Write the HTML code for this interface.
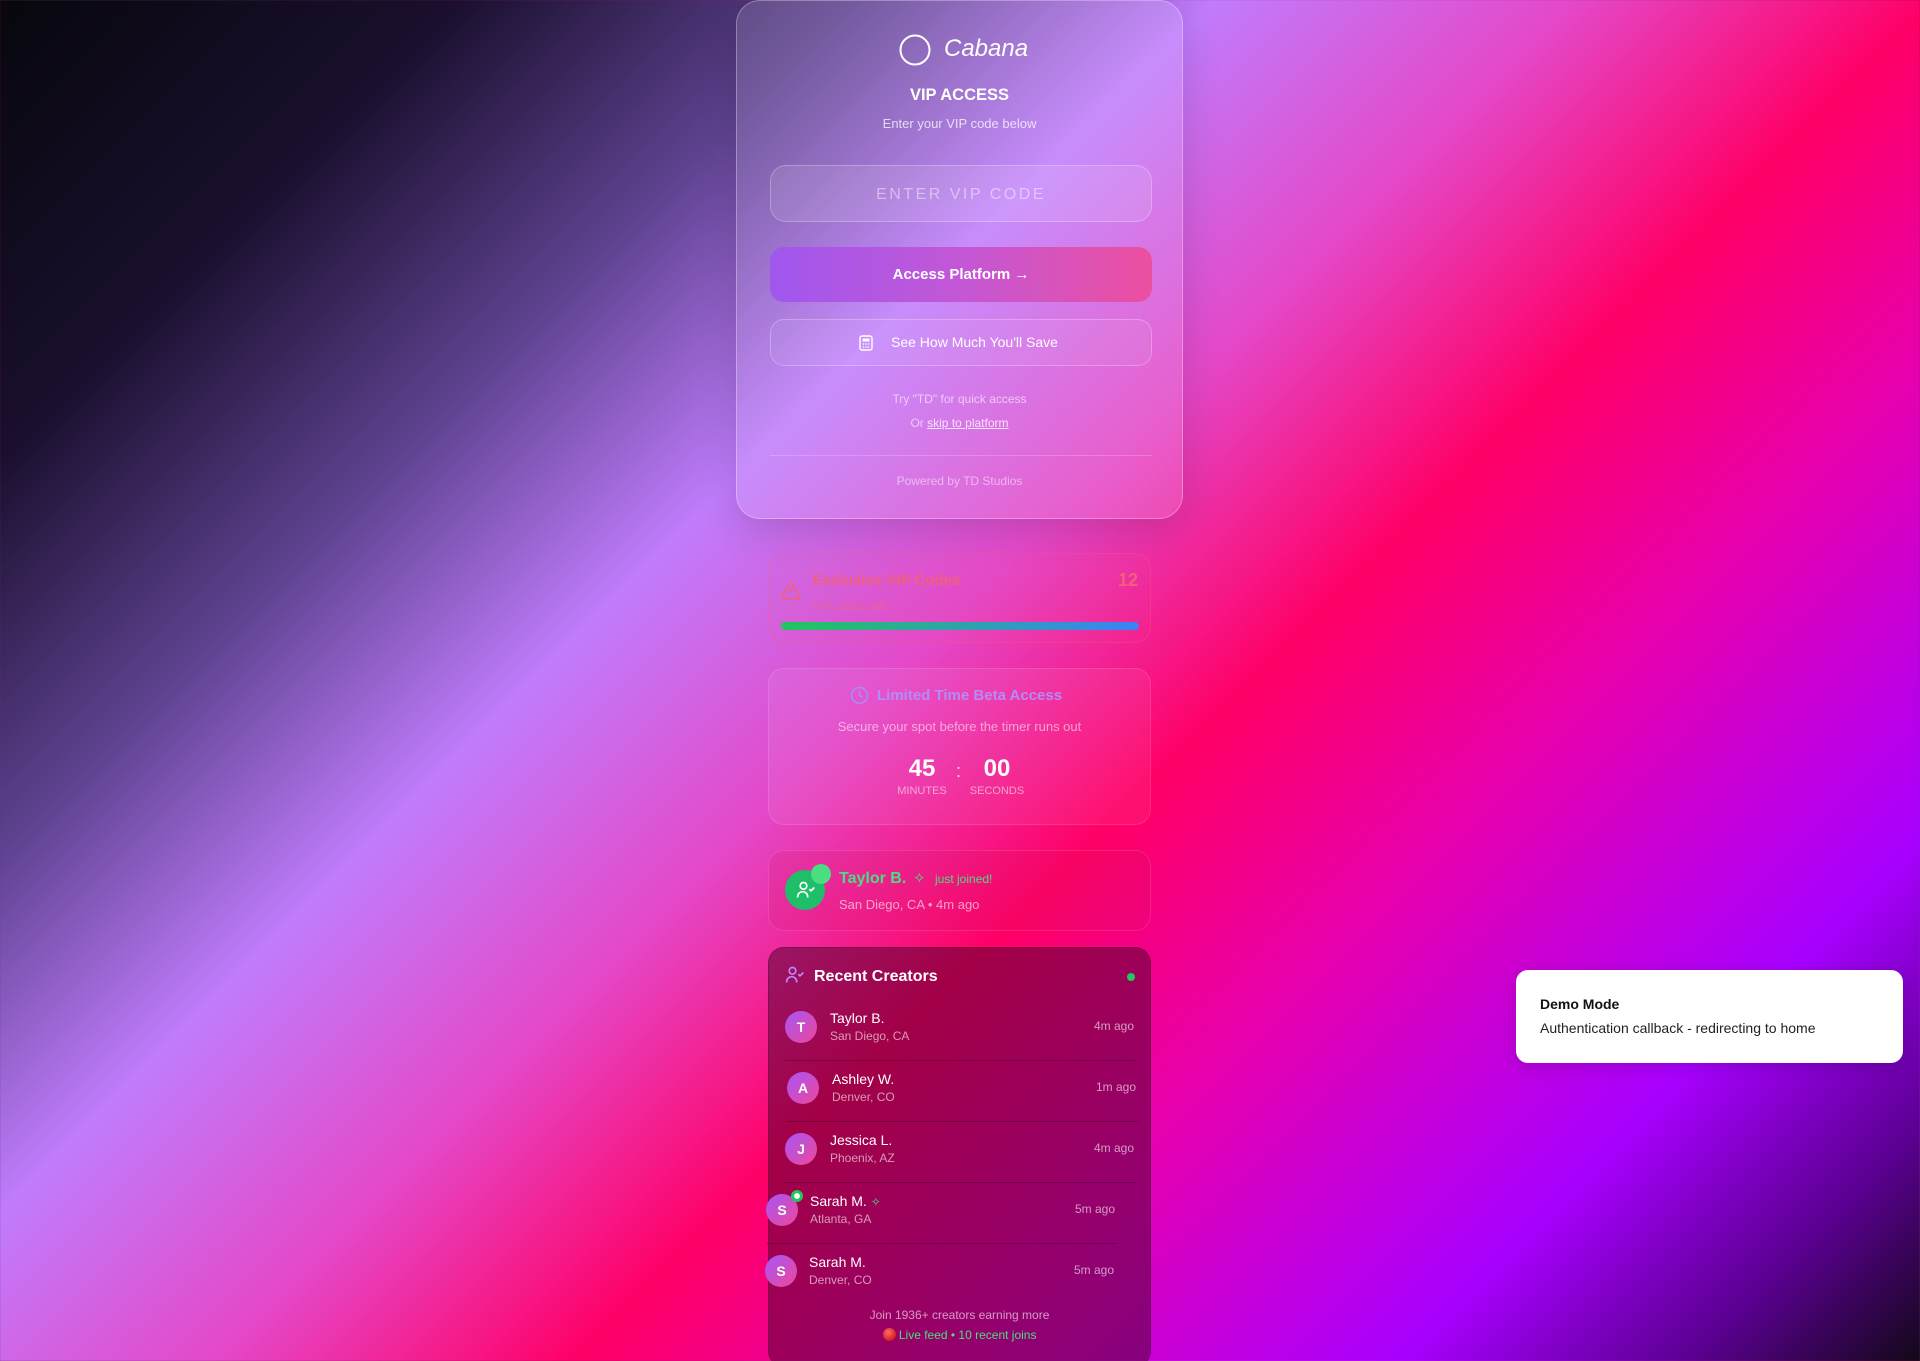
<!DOCTYPE html>
<html><head><meta charset="utf-8"><style>
*{box-sizing:border-box;margin:0;padding:0}
html,body{width:1920px;height:1361px;overflow:hidden}
body{font-family:"Liberation Sans",sans-serif;position:relative;
background:linear-gradient(135deg,#07070c 0%,#1a0f2e 14%,#5e4290 26%,#c07cfc 37%,#e448c8 48%,#ff0066 59%,#e600b0 70%,#a800ff 84%,#5a0090 93%,#120818 100%);}
.abs{position:absolute}
.card{position:absolute;left:736px;top:0;width:447px;height:519px;border-radius:24px;border:1px solid rgba(255,255,255,.3);background:rgba(255,255,255,.13);box-shadow:0 10px 40px rgba(0,0,0,.15)}
.c{text-align:center;left:0;width:100%}
.box{position:absolute;left:768px;width:383px;border-radius:16px;border:1px solid rgba(255,255,255,.12);background:rgba(255,255,255,.06)}
.av{position:absolute;width:32px;height:32px;border-radius:50%;background:linear-gradient(135deg,#a855f7,#ec4899);color:#fff;font-weight:bold;font-size:14px;text-align:center;line-height:32px}
.nm{position:absolute;color:#fff;font-size:14px}
.lc{position:absolute;color:rgba(255,255,255,.6);font-size:12px}
.tm{position:absolute;color:rgba(255,255,255,.6);font-size:12px;text-align:right}
.sep{position:absolute;height:1px;background:rgba(0,0,0,.25)}
</style></head><body>
<div class="card">
  <svg class="abs" style="left:162px;top:33px" width="32" height="32"><circle cx="16" cy="16" r="14.5" fill="none" stroke="#fff" stroke-width="2"/></svg>
  <div class="abs" style="left:207px;top:34px;color:#fff;font-size:24px;font-style:italic">Cabana</div>
  <div class="abs c" style="top:85px;color:#fff;font-size:16.5px;font-weight:bold">VIP ACCESS</div>
  <div class="abs c" style="top:115px;color:rgba(255,255,255,.75);font-size:13px">Enter your VIP code below</div>
  <div class="abs" style="left:33px;top:164px;width:382px;height:57px;border-radius:16px;border:1px solid rgba(255,255,255,.25);background:rgba(255,255,255,.1);text-align:center;line-height:57px;color:rgba(255,255,255,.45);font-size:16px;letter-spacing:2.5px">ENTER VIP CODE</div>
  <div class="abs" style="left:33px;top:246px;width:382px;height:55px;border-radius:14px;background:linear-gradient(90deg,#a057ee,#c357d6 50%,#ec4f9f);text-align:center;line-height:55px;color:#fff;font-size:15px;font-weight:bold">Access Platform →</div>
  <div class="abs" style="left:33px;top:318px;width:382px;height:47px;border-radius:14px;border:1px solid rgba(255,255,255,.25);background:rgba(255,255,255,.06);color:#fff;font-size:14px;line-height:45px">
    <svg class="abs" style="left:88px;top:15px" width="14" height="16" viewBox="0 0 14 16"><rect x="1" y="1" width="12" height="14" rx="2" fill="none" stroke="#fff" stroke-width="1.4"/><rect x="3.5" y="3.5" width="7" height="3" fill="#fff"/><circle cx="4.5" cy="9" r=".8" fill="#fff"/><circle cx="7" cy="9" r=".8" fill="#fff"/><circle cx="9.5" cy="9" r=".8" fill="#fff"/><circle cx="4.5" cy="12" r=".8" fill="#fff"/><circle cx="7" cy="12" r=".8" fill="#fff"/><circle cx="9.5" cy="12" r=".8" fill="#fff"/></svg>
    <span class="abs" style="left:120px">See How Much You'll Save</span></div>
  <div class="abs c" style="top:391px;color:rgba(255,255,255,.6);font-size:12px">Try "TD" for quick access</div>
  <div class="abs c" style="top:415px;color:rgba(255,255,255,.6);font-size:12px">Or <span style="text-decoration:underline;color:rgba(255,255,255,.8)">skip to platform</span></div>
  <div class="abs" style="left:33px;top:454px;width:382px;height:1px;background:rgba(255,255,255,.2)"></div>
  <div class="abs c" style="top:473px;color:rgba(255,255,255,.5);font-size:12px">Powered by TD Studios</div>
</div>

<div class="box" style="top:553px;height:90px;border-color:rgba(255,90,120,.3);background:rgba(255,80,120,.06)">
  <svg class="abs" style="left:12px;top:27px" width="20" height="20" viewBox="0 0 24 24" fill="none" stroke="#f0607a" stroke-width="2"><path d="M10.3 3.9L1.8 18a2 2 0 0 0 1.7 3h17a2 2 0 0 0 1.7-3L13.7 3.9a2 2 0 0 0-3.4 0z"/><path d="M12 9v4M12 17h.01"/></svg>
  <div class="abs" style="left:44px;top:18px;color:#f0607a;font-size:15px;font-weight:bold">Exclusive VIP Codes</div>
  <div class="abs" style="right:12px;top:16px;color:#f0607a;font-size:18px;font-weight:bold">12</div>
  <div class="abs" style="left:44px;top:45px;color:#f06580;font-size:12px;opacity:.7">VIP codes left</div>
  <div class="abs" style="left:12px;top:68px;width:358px;height:8px;border-radius:4px;background:linear-gradient(90deg,#22c55e,#3b82f6)"></div>
</div>

<div class="box" style="top:668px;height:157px">
  <svg class="abs" style="left:81px;top:17px" width="19" height="19" viewBox="0 0 24 24" fill="none" stroke="#a78bfa" stroke-width="2"><circle cx="12" cy="12" r="10"/><path d="M12 6v6l4 2"/></svg>
  <div class="abs" style="left:108px;top:18px;color:#b48cf8;font-size:15px;font-weight:bold">Limited Time Beta Access</div>
  <div class="abs c" style="top:50px;color:rgba(255,255,255,.55);font-size:13px">Secure your spot before the timer runs out</div>
  <div class="abs" style="left:125px;top:86px;width:56px;text-align:center;color:#fff;font-size:24px;font-weight:bold">45</div>
  <div class="abs" style="left:187px;top:92px;color:rgba(255,255,255,.8);font-size:18px">:</div>
  <div class="abs" style="left:196px;top:86px;width:64px;text-align:center;color:#fff;font-size:24px;font-weight:bold">00</div>
  <div class="abs" style="left:120px;top:116px;width:66px;text-align:center;color:rgba(255,255,255,.55);font-size:11px">MINUTES</div>
  <div class="abs" style="left:194px;top:116px;width:68px;text-align:center;color:rgba(255,255,255,.55);font-size:11px">SECONDS</div>
</div>

<div class="box" style="top:850px;height:81px;background:rgba(200,20,90,.15)">
  <div class="abs" style="left:16px;top:19px;width:40px;height:40px;border-radius:50%;background:#1fbf6a"></div>
  <svg class="abs" style="left:27px;top:29px" width="20" height="20" viewBox="0 0 24 24" fill="none" stroke="#fff" stroke-width="2"><circle cx="9" cy="7" r="4"/><path d="M2 21v-1a6 6 0 0 1 12 0v1M16 11l2 2 4-4"/></svg>
  <div class="abs" style="left:42px;top:13px;width:20px;height:20px;border-radius:50%;background:#4ade80"></div>
  <div class="abs" style="left:70px;top:19px;color:#4ade80;font-size:16px;font-weight:bold">Taylor B.</div>
  <div class="abs" style="left:144px;top:18px;color:#4ade80;font-size:15px">✧</div>
  <div class="abs" style="left:166px;top:21px;color:#4ade80;font-size:12px">just joined!</div>
  <div class="abs" style="left:70px;top:46px;color:rgba(255,255,255,.6);font-size:13px">San Diego, CA • 4m ago</div>
</div>

<div class="box" style="top:947px;height:420px;background:rgba(70,0,40,.5);border-color:rgba(0,0,0,.2)">
  <svg class="abs" style="left:16px;top:17px" width="20" height="20" viewBox="0 0 24 24" fill="none" stroke="#c084fc" stroke-width="2"><circle cx="9" cy="7" r="4"/><path d="M2 21v-1a6 6 0 0 1 12 0v1M16 11l2 2 4-4"/></svg>
  <div class="abs" style="left:45px;top:20px;color:#fff;font-size:16px;font-weight:bold">Recent Creators</div>
  <div class="abs" style="left:358px;top:25px;width:8px;height:8px;border-radius:50%;background:#22c55e"></div>

  <div class="av" style="left:16px;top:63px">T</div><div class="nm" style="left:61px;top:62px">Taylor B.</div><div class="lc" style="left:61px;top:81px">San Diego, CA</div><div class="tm" style="right:16px;top:71px">4m ago</div>
  <div class="sep" style="left:16px;top:112px;width:351px"></div>
  <div class="av" style="left:18px;top:124px">A</div><div class="nm" style="left:63px;top:123px">Ashley W.</div><div class="lc" style="left:63px;top:142px">Denver, CO</div><div class="tm" style="right:14px;top:132px">1m ago</div>
  <div class="sep" style="left:18px;top:173px;width:351px"></div>
  <div class="av" style="left:16px;top:185px">J</div><div class="nm" style="left:61px;top:184px">Jessica L.</div><div class="lc" style="left:61px;top:203px">Phoenix, AZ</div><div class="tm" style="right:16px;top:193px">4m ago</div>
  <div class="sep" style="left:16px;top:234px;width:351px"></div>
  <div class="av" style="left:-3px;top:246px">S</div><div class="abs" style="left:22px;top:242px;width:12px;height:12px;border-radius:50%;background:#22c55e;border:3px solid #22c55e;box-shadow:inset 0 0 0 3px #fff"></div>
  <div class="nm" style="left:41px;top:245px">Sarah M. <span style="color:#4ade80;font-size:12px">✧</span></div><div class="lc" style="left:41px;top:264px">Atlanta, GA</div><div class="tm" style="right:35px;top:254px">5m ago</div>
  <div class="sep" style="left:-3px;top:295px;width:351px"></div>
  <div class="av" style="left:-4px;top:307px">S</div><div class="nm" style="left:40px;top:306px">Sarah M.</div><div class="lc" style="left:40px;top:325px">Denver, CO</div><div class="tm" style="right:36px;top:315px">5m ago</div>

  <div class="abs c" style="top:360px;color:rgba(255,255,255,.6);font-size:12px">Join 1936+ creators earning more</div>
  <div class="abs c" style="top:380px;color:#4ade80;font-size:12px"><span style="display:inline-block;width:13px;height:13px;border-radius:50%;background:radial-gradient(circle at 40% 35%,#ff6b6b,#c00000);vertical-align:-2px"></span> Live feed • 10 recent joins</div>
</div>

<div class="abs" style="left:1516px;top:970px;width:387px;height:93px;border-radius:12px;background:#fff;box-shadow:0 4px 16px rgba(0,0,0,.15)">
  <div class="abs" style="left:24px;top:26px;color:#111;font-size:14px;font-weight:bold">Demo Mode</div>
  <div class="abs" style="left:24px;top:50px;color:#222;font-size:14px">Authentication callback - redirecting to home</div>
</div>
</body></html>
